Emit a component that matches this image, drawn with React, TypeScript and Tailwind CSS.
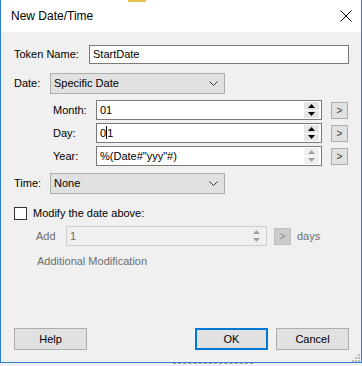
import React from "react";

const font = { fontFamily: '"Liberation Sans", Arial, sans-serif' };

function Spinner({ disabled }: { disabled?: boolean }) {
  const c = disabled ? "#a0a0a0" : "#000";
  return (
    <div className="flex flex-col w-[15px] h-[16px] gap-px">
      <div className={`flex-1 flex items-center justify-center ${disabled ? "bg-[#f0f0f0]" : "bg-[#e5e5e5]"}`}>
        <svg width="7" height="4" viewBox="0 0 7 4">
          <path d="M0 4 L3.5 0 L7 4 Z" fill={c} />
        </svg>
      </div>
      <div className={`flex-1 flex items-center justify-center ${disabled ? "bg-[#f0f0f0]" : "bg-[#e5e5e5]"}`}>
        <svg width="7" height="4" viewBox="0 0 7 4">
          <path d="M0 0 L7 0 L3.5 4 Z" fill={c} />
        </svg>
      </div>
    </div>
  );
}

function ArrowBtn({ disabled }: { disabled?: boolean }) {
  return (
    <div
      className={`w-[17px] h-[17px] border flex items-center justify-center text-[10px] ${
        disabled ? "border-[#bfbfbf] bg-[#cccccc] text-[#8a8a8a]" : "border-[#adadad] bg-[#e1e1e1] text-[#333]"
      }`}
    >
      &gt;
    </div>
  );
}

function SpinBox({ value, width, disabled, caret }: { value: string; width: string; disabled?: boolean; caret?: boolean }) {
  return (
    <div
      className={`${width} h-[20px] border flex items-center pl-[3px] pr-[2px] ${
        disabled ? "border-[#cccccc] bg-[#f0f0f0] text-[#6d6d6d]" : "border-[#7a7a7a] bg-white text-black"
      }`}
    >
      <span className="flex-1 whitespace-nowrap">
        {caret ? (
          <>
            0<span className="inline-block w-px h-[13px] bg-black align-middle -mt-[2px]" />1
          </>
        ) : (
          value
        )}
      </span>
      <Spinner disabled={disabled} />
    </div>
  );
}

function Combo({ value }: { value: string }) {
  return (
    <div className="w-[175px] h-[21px] border border-[#adadad] bg-[#e1e1e1] flex items-center pl-[3px] pr-[6px]">
      <span className="flex-1">{value}</span>
      <svg width="9" height="5" viewBox="0 0 9 5">
        <path d="M0.5 0.5 L4.5 4.5 L8.5 0.5" fill="none" stroke="#333" strokeWidth="1" />
      </svg>
    </div>
  );
}

function Btn({ label, primary }: { label: string; primary?: boolean }) {
  return (
    <div
      className={`w-[73px] h-[22px] bg-[#e1e1e1] flex items-center justify-center ${
        primary ? "border-2 border-[#0078d7]" : "border border-[#adadad]"
      }`}
    >
      {label}
    </div>
  );
}

export default function App() {
  return (
    <div className="w-[362px] h-[366px] bg-[#f0f0f0] text-[11px] text-black overflow-hidden relative" style={font}>
      <div className="absolute left-[128px] top-0 w-[18px] h-[2px] bg-[#e8c34a]" />
      <div className="w-[362px] h-[363px] border-x border-b border-[#2b7fd6] flex flex-col">
        <div className="h-[33px] bg-white flex items-center pl-[10px] pr-[9px]">
          <span className="flex-1 text-[12px]">New Date/Time</span>
          <svg width="12" height="12" viewBox="0 0 12 12">
            <path d="M0.5 0.5 L11.5 11.5 M11.5 0.5 L0.5 11.5" stroke="#000" strokeWidth="1" />
          </svg>
        </div>
        <div className="flex-1 bg-[#f0f0f0] flex flex-col pl-[13px] pr-[12px]">
          <div className="flex items-center mt-[13px] h-[19px]">
            <span className="w-[75px]">Token Name:</span>
            <div className="w-[260px] h-[19px] border border-[#7a7a7a] bg-white flex items-center pl-[3px]">StartDate</div>
          </div>
          <div className="flex items-center mt-[9px] h-[21px]">
            <span className="w-[36px]">Date:</span>
            <Combo value="Specific Date" />
          </div>
          <div className="flex flex-col gap-[3px] mt-[6px] pl-[39px]">
            {[
              { l: "Month:", v: "01" },
              { l: "Day:", v: "01", caret: true },
              { l: "Year:", v: '%(Date#"yyy"#)', disabled: true },
            ].map((r) => (
              <div key={r.l} className="flex items-center h-[20px]">
                <span className="w-[43px]">{r.l}</span>
                <div className="w-[226px] h-[20px] border border-[#7a7a7a] bg-white flex items-center pl-[3px] pr-[2px]">
                  <span className="flex-1 whitespace-nowrap">
                    {r.caret ? (
                      <>
                        0<span className="inline-block w-px h-[13px] bg-black align-middle -mt-[2px]" />1
                      </>
                    ) : (
                      r.v
                    )}
                  </span>
                  <Spinner disabled={r.disabled} />
                </div>
                <div className="ml-[9px]">
                  <ArrowBtn />
                </div>
              </div>
            ))}
          </div>
          <div className="flex items-center mt-[7px] h-[21px]">
            <span className="w-[36px]">Time:</span>
            <Combo value="None" />
          </div>
          <div className="flex items-center mt-[13px] h-[13px]">
            <div className="w-[13px] h-[13px] border border-[#333] bg-white" />
            <span className="ml-[6px]">Modify the date above:</span>
          </div>
          <div className="flex items-center mt-[6px] h-[20px] pl-[22px] text-[#6d6d6d]">
            <span className="w-[30px]">Add</span>
            <SpinBox value="1" width="w-[201px]" disabled />
            <div className="ml-[7px]">
              <ArrowBtn disabled />
            </div>
            <span className="ml-[6px] text-[#6d6d6d]">days</span>
          </div>
          <div className="mt-[8px] pl-[23px] text-[#6d6d6d] h-[14px] leading-[14px]">Additional Modification</div>
          <div className="flex items-center mt-[60px]">
            <Btn label="Help" />
            <div className="flex-1" />
            <Btn label="OK" primary />
            <div className="ml-[8px]">
              <Btn label="Cancel" />
            </div>
          </div>
          <div className="flex justify-end mt-[3px] -mr-[11px]">
            <svg width="9" height="9" viewBox="0 0 9 9">
              {[
                [7, 1],
                [4, 4],
                [7, 4],
                [1, 7],
                [4, 7],
                [7, 7],
              ].map(([x, y]) => (
                <rect key={`${x}-${y}`} x={x} y={y} width="2" height="2" fill="#b8b8b8" />
              ))}
            </svg>
          </div>
        </div>
      </div>
      <div className="ml-[173px] w-[80px] border-t border-dashed border-[#9a9a9a]" />
    </div>
  );
}
